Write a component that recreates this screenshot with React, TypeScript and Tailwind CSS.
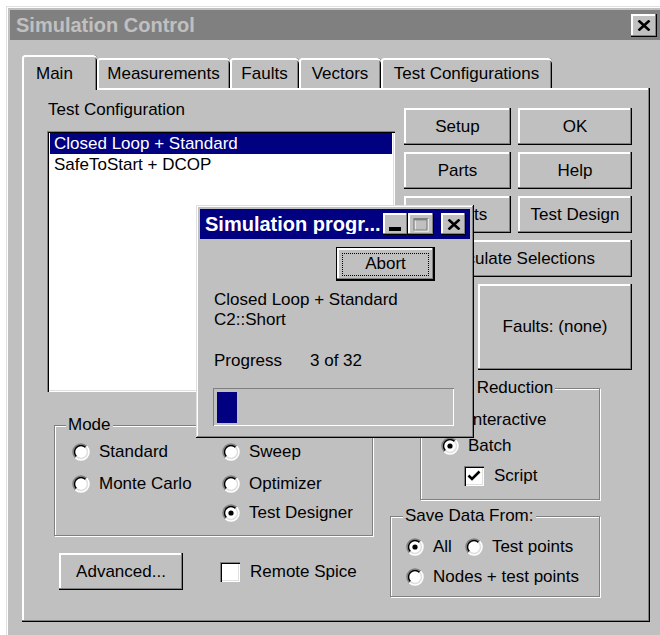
import React from "react";

// Win95-style bevels
const raised =
  "bg-[#c0c0c0] shadow-[inset_-1px_-1px_#000,inset_-2px_-2px_#808080,inset_2px_2px_#fff]";
const windowFrame =
  "bg-[#c0c0c0] shadow-[inset_-1px_-1px_#000,inset_1px_1px_#dfdfdf,inset_-2px_-2px_#808080,inset_2px_2px_#fff]";
const sunken =
  "bg-white shadow-[inset_1px_1px_#808080,inset_2px_2px_#000,inset_-1px_-1px_#fff,inset_-2px_-2px_#dfdfdf]";
const etched = "border border-[#808080] shadow-[inset_1px_1px_#fff,1px_1px_#fff]";
const tabEdge =
  "bg-[#c0c0c0] rounded-t-[4px] shadow-[inset_2px_0_#fff,inset_0_2px_#fff,inset_-1px_0_#000,inset_-2px_0_#808080]";

function XGlyph() {
  return (
    <svg width="14" height="11" viewBox="0 0 14 11">
      <path d="M1.5 0.5 L12.5 10.5 M12.5 0.5 L1.5 10.5" stroke="#000" strokeWidth="2.6" />
    </svg>
  );
}

function Radio({ checked = false }: { checked?: boolean }) {
  return (
    <svg width="18" height="18" viewBox="0 0 18 18" className="shrink-0">
      <circle cx="9" cy="9" r="8" fill="#fff" />
      <path d="M3.34 14.66 A8 8 0 0 1 14.66 3.34" fill="none" stroke="#808080" strokeWidth="1.5" />
      <path d="M4.4 13.6 A6.5 6.5 0 0 1 13.6 4.4" fill="none" stroke="#000" strokeWidth="1.5" />
      <path d="M14.66 3.34 A8 8 0 0 1 3.34 14.66" fill="none" stroke="#fff" strokeWidth="1.5" />
      <path d="M13.6 4.4 A6.5 6.5 0 0 1 4.4 13.6" fill="none" stroke="#dfdfdf" strokeWidth="1.5" />
      {checked && <circle cx="9" cy="9" r="2.6" fill="#000" />}
    </svg>
  );
}

function RadioItem({ label, checked }: { label: string; checked?: boolean }) {
  return (
    <div className="flex items-center gap-[9px] h-[24px] whitespace-nowrap">
      <Radio checked={checked} />
      <span>{label}</span>
    </div>
  );
}

function CheckItem({ label, checked }: { label: string; checked?: boolean }) {
  return (
    <div className="flex items-center gap-[10px] h-[20px] whitespace-nowrap">
      <span className={`w-[20px] h-[20px] shrink-0 flex items-center justify-center ${sunken}`}>
        {checked && (
          <svg width="14" height="12" viewBox="0 0 14 12">
            <path d="M1.5 5.5 L5 9 L12.5 1.5" fill="none" stroke="#000" strokeWidth="2.6" />
          </svg>
        )}
      </span>
      <span>{label}</span>
    </div>
  );
}

function Btn({ children, className = "" }: { children?: React.ReactNode; className?: string }) {
  return (
    <button type="button" className={`${raised} flex items-center justify-center whitespace-nowrap ${className}`}>
      {children}
    </button>
  );
}

function Group({
  title,
  indent,
  className,
  children,
}: {
  title: string;
  indent: string;
  className: string;
  children: React.ReactNode;
}) {
  return (
    <fieldset className={`${etched} ${className}`}>
      <legend className={`${indent} px-[2px] bg-[#c0c0c0] leading-[20px]`}>{title}</legend>
      {children}
    </fieldset>
  );
}

const tabs = [
  { label: "Measurements", w: "w-[133px]" },
  { label: "Faults", w: "w-[69px]" },
  { label: "Vectors", w: "w-[82px]" },
  { label: "Test Configurations", w: "w-[171px]" },
];

const configs = ["Closed Loop + Standard", "SafeToStart + DCOP"];

function ProgressDialog() {
  return (
    <div className={`absolute left-[196px] top-[205px] z-20 w-[278px] h-[233px] p-[4px] ${windowFrame}`}>
      <div className="h-[30px] bg-[#000080] flex items-center pl-[5px] pr-[4px]">
        <span className="font-bold text-[20px] text-white whitespace-nowrap overflow-hidden">
          Simulation progr...
        </span>
        <div className="ml-auto flex items-center shrink-0">
          <Btn className="w-[25px] h-[22px] !items-end !justify-start pl-[6px] pb-[4px]">
            <span className="block w-[12px] h-[4px] bg-black" />
          </Btn>
          <Btn className="w-[26px] h-[22px]">
            <svg width="17" height="15" viewBox="0 0 17 15">
              <path d="M2 2.5 H15 M2 2 V14 H15 V2" fill="none" stroke="#fff" strokeWidth="1.2" />
              <path d="M1 1.5 H15 M1 1 V13 H14 V1" fill="none" stroke="#808080" strokeWidth="1.2" />
              <path d="M1 2.6 H14" stroke="#808080" strokeWidth="1.6" />
            </svg>
          </Btn>
          <Btn className="ml-[7px] w-[25px] h-[22px]">
            <XGlyph />
          </Btn>
        </div>
      </div>
      <div className="px-[14px]">
        <div className="mt-[8px] flex justify-end pr-[21px]">
          <button
            type="button"
            className={`w-[99px] h-[34px] border border-black flex items-center justify-center ${raised}`}
          >
            <span className="w-[87px] h-[23px] border border-dotted border-black flex items-center justify-center">
              Abort
            </span>
          </button>
        </div>
        <div className="mt-[9px]">Closed Loop + Standard</div>
        <div>C2::Short</div>
        <div className="mt-[21px] flex">
          <span className="w-[96px]">Progress</span>
          <span>3 of 32</span>
        </div>
        <div className="mt-[17px] -ml-[1px] w-[241px] h-[38px] pt-[4px] pl-[4px] shadow-[inset_1px_1px_#808080,inset_-1px_-1px_#fff]">
          <div className="w-[20px] h-[31px] bg-[#000080]" />
        </div>
      </div>
    </div>
  );
}

export default function App() {
  return (
    <div className="relative w-[660px] h-[635px] overflow-hidden bg-white font-['Liberation_Sans',Arial,sans-serif] text-[17px] leading-[20px] text-black">
      <div className="ml-[6px] mt-[6px] w-[658px] h-[640px] p-[4px] bg-[#c0c0c0] shadow-[inset_1px_1px_#dfdfdf,inset_2px_2px_#fff]">
        {/* inactive caption */}
        <div className="h-[30px] bg-[#808080] flex items-center pl-[6px] pr-[3px]">
          <span className="font-bold text-[20px] text-[#c0c0c0]">Simulation Control</span>
          <Btn className="ml-auto w-[26px] h-[23px]">
            <XGlyph />
          </Btn>
        </div>

        {/* tab strip */}
        <div className="ml-[12px] mt-[15px] h-[35px] flex items-end">
          <div className={`relative z-10 w-[75px] h-[35px] pl-[14px] pt-[9px] ${tabEdge}`}>Main</div>
          {tabs.map((t) => (
            <div key={t.label} className={`${t.w} h-[30px] mb-[2px] pt-[2px] flex items-center justify-center whitespace-nowrap ${tabEdge}`}>
              {t.label}
            </div>
          ))}
        </div>

        {/* tab page */}
        <div className={`-mt-[2px] ml-[12px] w-[628px] h-[534px] flex ${raised}`}>
          <div className="ml-[25px] w-[348px] shrink-0 pt-[12px] flex flex-col">
            <div className="ml-[1px]">Test Configuration</div>
            <div className={`mt-[11px] h-[261px] px-[3px] pt-[2px] ${sunken}`}>
              {configs.map((c, i) => (
                <div
                  key={c}
                  className={`h-[21px] leading-[21px] pl-[4px] ${i === 0 ? "bg-[#000080] text-white" : ""}`}
                >
                  {c}
                </div>
              ))}
            </div>

            <Group title="Mode" indent="ml-[11px]" className="ml-[7px] mt-[23px] w-[319px] h-[121px]">
              <div className="pl-[17px] pt-[5px] grid grid-cols-[150px_1fr] gap-y-[8px]">
                <RadioItem label="Standard" />
                <RadioItem label="Sweep" />
                <RadioItem label="Monte Carlo" />
                <RadioItem label="Optimizer" />
                <div />
                <div className="-mt-[3px]">
                  <RadioItem label="Test Designer" checked />
                </div>
              </div>
            </Group>

            <div className="mt-[17px] ml-[12px] flex items-center">
              <Btn className="w-[124px] h-[37px]">Advanced...</Btn>
              <div className="ml-[37px]">
                <CheckItem label="Remote Spice" />
              </div>
            </div>
          </div>

          <div className="flex-1 pt-[20px]">
            <div className="ml-[9px] grid grid-cols-[107px_114px] grid-rows-[37px_37px_37px_37px_86px] gap-x-[7px] gap-y-[7px]">
              <Btn>Setup</Btn>
              <Btn>OK</Btn>
              <Btn>Parts</Btn>
              <Btn>Help</Btn>
              <Btn>Outputs</Btn>
              <Btn>Test Design</Btn>
              <Btn className="col-span-2">Calculate Selections</Btn>
              <div className="col-span-2 flex justify-end">
                <Btn className="w-[154px] h-[86px]">Faults: (none)</Btn>
              </div>
            </div>

            <Group title="Data Reduction" indent="ml-[13px]" className="ml-[25px] mt-[8px] w-[180px] h-[122px]">
              <div className="pl-[20px] pt-[10px] flex flex-col">
                <RadioItem label="Interactive" />
                <div className="mt-[2px]">
                  <RadioItem label="Batch" checked />
                </div>
                <div className="mt-[8px] ml-[23px]">
                  <CheckItem label="Script" checked />
                </div>
              </div>
            </Group>

            <Group title="Save Data From:" indent="ml-[12px]" className="-ml-[5px] mt-[6px] w-[210px] h-[91px]">
              <div className="pl-[15px] pt-[9px] flex flex-col gap-y-[6px]">
                <div className="flex items-center">
                  <RadioItem label="All" checked />
                  <div className="ml-[13px]">
                    <RadioItem label="Test points" />
                  </div>
                </div>
                <RadioItem label="Nodes + test points" />
              </div>
            </Group>
          </div>
        </div>
      </div>

      <ProgressDialog />
    </div>
  );
}
